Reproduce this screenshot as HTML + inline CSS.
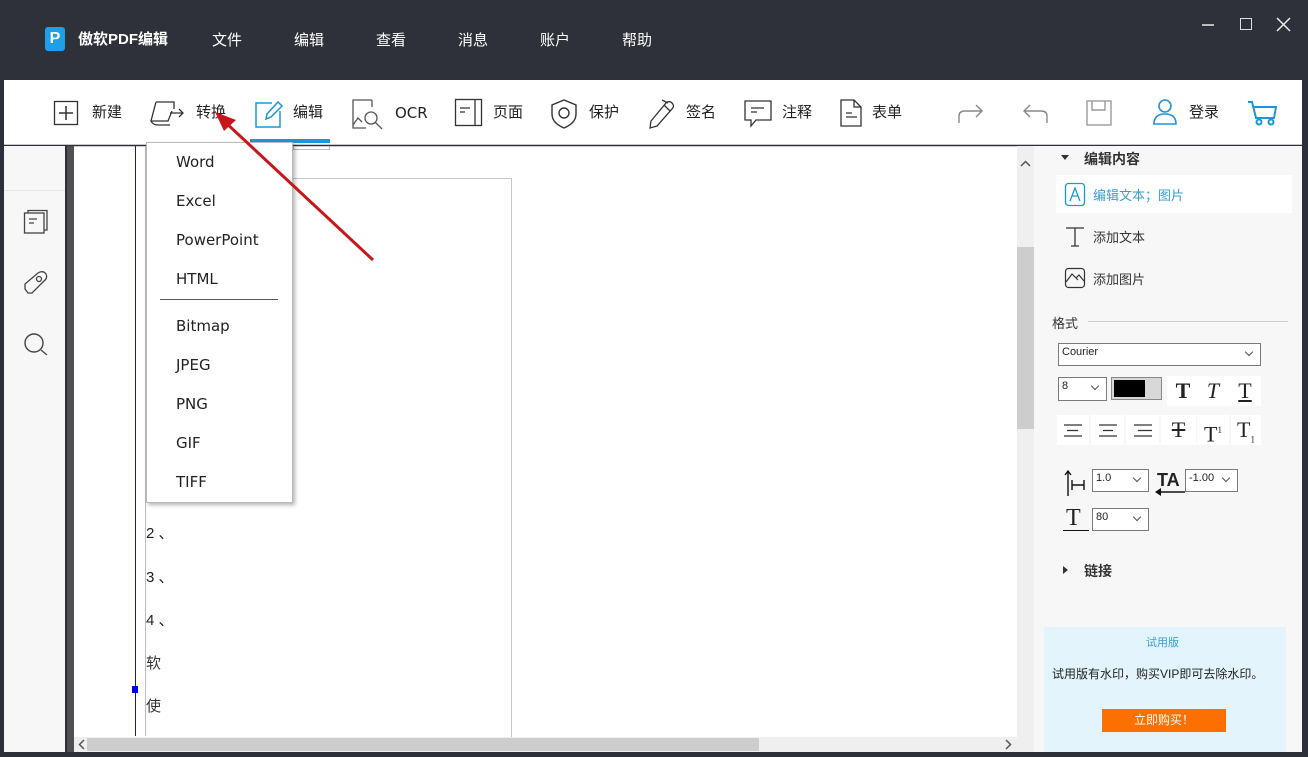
<!DOCTYPE html>
<html><head><meta charset="utf-8">
<style>
*{margin:0;padding:0;box-sizing:border-box}
body{width:1308px;height:757px;overflow:hidden;background:#2d3038;font-family:"Liberation Sans","Noto Sans CJK SC",sans-serif;position:relative;color:#222}
.abs{position:absolute}
.title{left:0;top:0;width:1308px;height:80px;background:#2e3139}
.menu{top:29px;color:#fff;font-size:15px}
.tb{left:4px;top:80px;width:1298px;height:65px;background:#fff;border-bottom:1px solid #c8c8c8}
.tl{top:102px;font-size:15px;color:#222;line-height:22px}
svg{position:absolute;overflow:visible}
.side{left:4px;top:146px;width:61px;height:606px;background:#f7f7f7}
.dbar{left:67px;top:146px;width:7px;height:606px;background:#505050}
.doc{left:74px;top:146px;width:944px;height:591px;background:#fff}
.vs{left:1017px;top:146px;width:17px;height:591px;background:#efefef}
.hs{left:74px;top:737px;width:960px;height:15px;background:#efefef}
.rp{left:1034px;top:146px;width:268px;height:606px;background:#f7f7f7}
.dd{position:absolute;background:#fff;border:1px solid #7a7a7a;font-size:11px;font-family:"Liberation Sans",sans-serif;padding:2px 3px}
.dd:after{content:"";position:absolute;right:8px;top:5px;width:5px;height:5px;border-right:1px solid #555;border-bottom:1px solid #555;transform:rotate(45deg)}
.fb{position:absolute;background:#fff;width:32px;height:30px;font-family:"Liberation Serif",serif;font-size:22px;text-align:center;line-height:30px}
.mi{position:absolute;left:176px;font-size:15px;color:#222;font-family:"DejaVu Sans","Liberation Sans",sans-serif}
</style></head><body>
<div class="abs title"></div>
<div class="abs" style="left:45px;top:27px;width:20px;height:24px;background:#1ea0e8;border-radius:3px;color:#fff;font-weight:bold;font-size:16px;text-align:center;line-height:24px">P</div>
<div class="abs" style="left:78px;top:28px;color:#fff;font-size:15px;font-weight:bold">傲软PDF编辑</div>
<div class="abs menu" style="left:212px">文件</div>
<div class="abs menu" style="left:294px">编辑</div>
<div class="abs menu" style="left:376px">查看</div>
<div class="abs menu" style="left:458px">消息</div>
<div class="abs menu" style="left:540px">账户</div>
<div class="abs menu" style="left:622px">帮助</div>
<div class="abs" style="left:1202px;top:24px;width:12px;height:2px;background:#bbb"></div>
<div class="abs" style="left:1240px;top:18px;width:12px;height:12px;border:1px solid #ddd"></div>
<svg style="left:1277px;top:18px" width="13" height="13"><path d="M0 0L13 13M13 0L0 13" stroke="#eee" stroke-width="1.5"/></svg>

<div class="abs tb"></div>
<svg style="left:54px;top:101px" width="24" height="24"><rect x="0.5" y="0.5" width="23" height="23" fill="none" stroke="#333" stroke-width="1.3"/><path d="M12 5V19M5 12H19" stroke="#333" stroke-width="1.5"/></svg>
<div class="abs tl" style="left:92px">新建</div>
<svg style="left:150px;top:101px" width="36" height="26" fill="none" stroke="#333" stroke-width="1.3"><path d="M6 1H24V8M6 1L1 20H18L22 10M1 20Q3 24 8 24H20"/><path d="M20 12H33M29 8L33 12L29 16"/></svg>
<div class="abs tl" style="left:196px">转换</div>
<svg style="left:254px;top:99px" width="30" height="30" fill="none" stroke="#1e96d6" stroke-width="1.5"><path d="M18 4H2V28H26V12"/><path d="M12 20L13 15L24 3L28 7L17 18Z"/></svg>
<div class="abs tl" style="left:293px">编辑</div>
<div class="abs" style="left:250px;top:139px;width:80px;height:4px;background:#1e96d6"></div>
<svg style="left:352px;top:99px" width="32" height="30" fill="none" stroke="#555" stroke-width="1.3"><path d="M20 1H1V29H14M20 1V8"/><path d="M1 26L6 19L10 23"/><circle cx="19" cy="19" r="6"/><path d="M23 23L30 30"/></svg>
<div class="abs tl" style="left:395px;font-family:'DejaVu Sans',sans-serif;font-size:15px">OCR</div>
<svg style="left:455px;top:99px" width="28" height="28" fill="none" stroke="#333" stroke-width="1.3"><rect x="0.5" y="0.5" width="26" height="26"/><path d="M20 1V27M5 9H15M5 13H10"/></svg>
<div class="abs tl" style="left:493px">页面</div>
<svg style="left:551px;top:99px" width="26" height="30" fill="none" stroke="#333" stroke-width="1.4"><path d="M13 1L25 6V15Q25 24 13 29Q1 24 1 15V6Z"/><circle cx="13" cy="14" r="5"/></svg>
<div class="abs tl" style="left:589px">保护</div>
<svg style="left:648px;top:99px" width="28" height="30" fill="none" stroke="#333" stroke-width="1.3"><path d="M3 22L18 4Q21 1 24 4Q27 7 24 10L9 27L2 29ZM16 6L22 12M20 4L14 1"/></svg>
<div class="abs tl" style="left:686px">签名</div>
<svg style="left:744px;top:100px" width="28" height="28" fill="none" stroke="#333" stroke-width="1.3"><path d="M1 1H27V20H12L7 26V20H1Z"/><path d="M7 8H20M7 12H13"/></svg>
<div class="abs tl" style="left:782px">注释</div>
<svg style="left:840px;top:99px" width="22" height="28" fill="none" stroke="#333" stroke-width="1.3"><path d="M1 1H14L21 8V27H1Z"/><path d="M14 1V8H21M6 14H12M6 18H17"/></svg>
<div class="abs tl" style="left:872px">表单</div>
<svg style="left:958px;top:104px" width="26" height="20" fill="none" stroke="#888" stroke-width="1.4"><path d="M1 19V12Q1 7 7 7H24M18 1L24 7L18 13"/></svg>
<svg style="left:1022px;top:104px" width="26" height="20" fill="none" stroke="#888" stroke-width="1.4"><path d="M25 19V12Q25 7 19 7H2M8 1L2 7L8 13"/></svg>
<svg style="left:1086px;top:100px" width="26" height="26" fill="none" stroke="#999" stroke-width="1.4"><rect x="1" y="1" width="24" height="24"/><path d="M6 1V10H19V1"/></svg>
<svg style="left:1153px;top:98px" width="24" height="28" fill="none" stroke="#1e96d6" stroke-width="1.6"><circle cx="12" cy="8" r="6"/><path d="M1 26Q1 16 12 16Q23 16 23 26Z"/></svg>
<div class="abs tl" style="left:1189px">登录</div>
<svg style="left:1247px;top:100px" width="32" height="26" fill="none" stroke="#1e96d6" stroke-width="2"><path d="M1 2H5L9 18H27L29 7H6"/><circle cx="12" cy="22" r="2.5"/><circle cx="24" cy="22" r="2.5"/></svg>

<div class="abs side"></div>
<div class="abs" style="left:4px;top:190px;width:61px;height:1px;background:#e6e6e6"></div>
<svg style="left:24px;top:210px" width="24" height="24" fill="none" stroke="#444" stroke-width="1.3"><path d="M4 3V0.5H23V20H20"/><rect x="0.5" y="3" width="19.5" height="20"/><path d="M5 9H13M5 13H10"/></svg>
<svg style="left:24px;top:271px" width="24" height="24" fill="none" stroke="#444" stroke-width="1.3"><path d="M1 18L1 13L14 2Q19 -1 22 3Q24 7 20 10L8 22L4 22Z"/><circle cx="15" cy="8" r="2.5"/></svg>
<svg style="left:24px;top:333px" width="24" height="24" fill="none" stroke="#444" stroke-width="1.4"><circle cx="10" cy="10" r="9"/><path d="M17 17L23 22"/></svg>
<div class="abs dbar"></div>
<div class="abs doc"></div>
<div class="abs" style="left:74px;top:146px;width:944px;height:1px;background:#ccc"></div>
<div class="abs" style="left:293px;top:146px;width:37px;height:4px;border:1px solid #bbb;border-top:none"></div>
<div class="abs" style="left:293px;top:178px;width:219px;height:560px;border:1px solid #c8c8c8;border-bottom:none;border-left:none"></div>
<div class="abs" style="left:135px;top:146px;width:1px;height:590px;background:#1a1a8a"></div>
<div class="abs" style="left:145px;top:146px;width:1px;height:590px;background:#bbb"></div>
<div class="abs" style="left:132px;top:686px;width:6px;height:7px;background:#0000dd"></div>
<div class="abs" style="left:146px;top:522px;font-size:15px">2 、</div>
<div class="abs" style="left:146px;top:566px;font-size:15px">3 、</div>
<div class="abs" style="left:146px;top:609px;font-size:15px">4 、</div>
<div class="abs" style="left:146px;top:652px;font-size:15px;color:#333">软</div>
<div class="abs" style="left:146px;top:695px;font-size:15px;color:#333">使</div>

<div class="abs" style="left:146px;top:142px;width:147px;height:361px;background:#fff;border:1px solid #bbb;box-shadow:2px 2px 4px rgba(0,0,0,.3)"></div>
<div class="mi" style="top:153px">Word</div>
<div class="mi" style="top:192px">Excel</div>
<div class="mi" style="top:231px">PowerPoint</div>
<div class="mi" style="top:270px">HTML</div>
<div class="abs" style="left:160px;top:299px;width:118px;height:1px;background:#555"></div>
<div class="mi" style="top:317px">Bitmap</div>
<div class="mi" style="top:356px">JPEG</div>
<div class="mi" style="top:395px">PNG</div>
<div class="mi" style="top:434px">GIF</div>
<div class="mi" style="top:473px">TIFF</div>

<svg style="left:0;top:0" width="1308" height="757"><path d="M373 260L225 122" stroke="#c9161b" stroke-width="3"/><path d="M215 112L236 120L224 131Z" fill="#c9161b"/></svg>

<div class="abs vs"></div>
<div class="abs" style="left:1017px;top:247px;width:17px;height:182px;background:#cdcdcd"></div>
<svg style="left:1021px;top:161px" width="9" height="5"><path d="M0 5L4.5 0.5L9 5" fill="none" stroke="#555" stroke-width="1.5"/></svg>
<svg style="left:1021px;top:742px" width="9" height="5"><path d="M0 0L4.5 4.5L9 0" fill="none" stroke="#555" stroke-width="1.5"/></svg>
<div class="abs hs"></div>
<div class="abs" style="left:87px;top:738px;width:672px;height:13px;background:#cdcdcd"></div>
<svg style="left:79px;top:740px" width="5" height="9"><path d="M5 0L0.5 4.5L5 9" fill="none" stroke="#555" stroke-width="1.5"/></svg>
<svg style="left:1006px;top:740px" width="5" height="9"><path d="M0 0L4.5 4.5L0 9" fill="none" stroke="#555" stroke-width="1.5"/></svg>

<div class="abs rp"></div>
<div class="abs" style="left:1061px;top:155px;width:0;height:0;border-left:4px solid transparent;border-right:4px solid transparent;border-top:5px solid #333"></div>
<div class="abs" style="left:1084px;top:149px;font-size:14px;font-weight:bold;color:#333">编辑内容</div>
<div class="abs" style="left:1056px;top:175px;width:236px;height:38px;background:#fff"></div>
<svg style="left:1065px;top:183px" width="20" height="24" fill="none" stroke="#1e96d6" stroke-width="1.3"><rect x="0.5" y="0.5" width="19" height="22" rx="3"/><path d="M5 18L10 5L15 18M7 13H13"/></svg>
<div class="abs" style="left:1093px;top:185px;font-size:13px;color:#3a9ed6">编辑文本；图片</div>
<svg style="left:1065px;top:227px" width="20" height="20" fill="none" stroke="#333" stroke-width="1.3"><path d="M1 1H19M10 1V19M6 19H14"/></svg>
<div class="abs" style="left:1093px;top:227px;font-size:13px;color:#333">添加文本</div>
<svg style="left:1065px;top:268px" width="20" height="20" fill="none" stroke="#333" stroke-width="1.2"><rect x="0.5" y="0.5" width="19" height="19" rx="3"/><path d="M1 14L7 6L13 12M11 10L14 7L19 13"/></svg>
<div class="abs" style="left:1093px;top:269px;font-size:13px;color:#333">添加图片</div>
<div class="abs" style="left:1052px;top:313px;font-size:13px;color:#333">格式</div>
<div class="abs" style="left:1088px;top:321px;width:200px;height:1px;background:#ccc"></div>
<div class="dd" style="left:1058px;top:343px;width:203px;height:23px">Courier</div>
<div class="dd" style="left:1058px;top:377px;width:49px;height:24px">8</div>
<div class="abs" style="left:1111px;top:377px;width:51px;height:23px;border:1px solid #888;background:#d8d8d8"><div style="position:absolute;left:2px;top:2px;width:31px;height:17px;background:#000"></div></div>
<div class="fb" style="left:1167px;top:376px;font-weight:bold">T</div>
<div class="fb" style="left:1197px;top:376px;font-style:italic">T</div>
<div class="fb" style="left:1229px;top:376px;text-decoration:underline">T</div>
<div class="fb" style="left:1057px;top:415px;width:32px"></div>
<div class="fb" style="left:1091px;top:415px;width:33px"></div>
<div class="fb" style="left:1126px;top:415px;width:33px"></div>
<svg style="left:1064px;top:424px" width="120" height="14" fill="none" stroke="#333" stroke-width="1.2"><path d="M0 1H18M3 6.5H14M0 12H18"/><path d="M35 1H53M39 6.5H49M35 12H53"/><path d="M70 1H88M74 6.5H88M70 12H88"/></svg>
<div class="fb" style="left:1161px;top:415px;width:35px;text-decoration:line-through">T</div>
<div class="fb" style="left:1197px;top:415px;width:32px">T<sup style="font-size:9px">1</sup></div>
<div class="fb" style="left:1231px;top:415px;width:30px">T<sub style="font-size:9px">1</sub></div>
<svg style="left:1064px;top:470px" width="28" height="28" fill="none" stroke="#111" stroke-width="1.4"><path d="M4 26V2M1 5L4 1L7 5M8 15H20M8 10V20M20 10V20"/></svg>
<div class="dd" style="left:1092px;top:469px;width:57px;height:23px">1.0</div>
<div class="abs" style="left:1157px;top:470px;font-size:18px;font-weight:bold;font-family:'Liberation Sans'">TA</div>
<svg style="left:1155px;top:488px" width="30" height="8"><path d="M2 4H30" stroke="#111" stroke-width="1.5"/><path d="M0 4L6 0V8Z" fill="#111"/></svg>
<div class="dd" style="left:1185px;top:469px;width:53px;height:23px">-1.00</div>
<div class="abs" style="left:1066px;top:505px;font-size:24px;font-family:'Liberation Serif'">T</div>
<div class="abs" style="left:1063px;top:530px;width:26px;height:1px;background:#111"></div>
<div class="dd" style="left:1092px;top:508px;width:57px;height:23px">80</div>
<div class="abs" style="left:1063px;top:566px;width:0;height:0;border-top:4px solid transparent;border-bottom:4px solid transparent;border-left:5px solid #333"></div>
<div class="abs" style="left:1084px;top:561px;font-size:14px;font-weight:bold;color:#333">链接</div>
<div class="abs" style="left:1044px;top:627px;width:242px;height:125px;background:#e3f4fd"></div>
<div class="abs" style="left:1146px;top:634px;font-size:11px;color:#3a9ed6">试用版</div>
<div class="abs" style="left:1052px;top:665px;font-size:12px;color:#222">试用版有水印，购买VIP即可去除水印。</div>
<div class="abs" style="left:1102px;top:709px;width:124px;height:23px;background:#fb7000;color:#fff;font-size:12px;text-align:center;line-height:23px">立即购买！</div>
<div class="abs" style="left:1302px;top:80px;width:6px;height:677px;background:#2d3038"></div>
<div class="abs" style="left:0;top:752px;width:1308px;height:5px;background:#2d3038"></div>
</body></html>
